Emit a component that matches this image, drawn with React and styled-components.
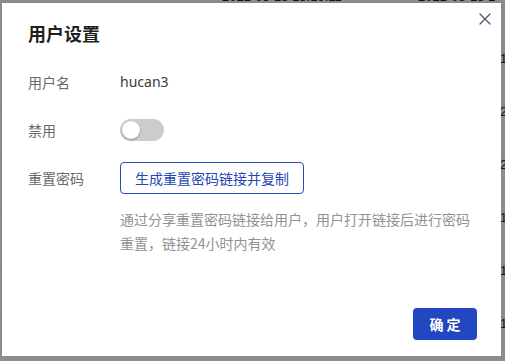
import React from "react";
import styled, { createGlobalStyle } from "styled-components";

const Global = createGlobalStyle`
  html, body { margin: 0; padding: 0; }
  body {
    width: 505px;
    height: 361px;
    overflow: hidden;
    background: #ffffff;
    font-family: "Noto Sans", "Noto Sans CJK SC", sans-serif;
  }
`;

const Page = styled.div`
  position: relative;
  width: 505px;
  height: 361px;
  overflow: hidden;
  background: #ffffff;
`;

const BackTable = styled.div`
  display: flex;
  flex-direction: column;
  margin-top: -9px;
`;

const BackRow = styled.div`
  display: flex;
  height: ${(p) => (p.$first ? 62 : 53)}px;
  align-items: flex-start;
  border-bottom: 1px solid #e8e8e8;
  box-sizing: border-box;
  font-size: 13px;
  line-height: 12px;
  color: #222;
  font-family: "Liberation Sans", sans-serif;
`;

const BackCell = styled.div`
  width: ${(p) => p.$w}px;
  flex: none;
  white-space: nowrap;
  overflow: hidden;
`;

const Overlay = styled.div`
  position: absolute;
  inset: 0;
  background: rgba(0, 0, 0, 0.45);
`;

const Modal = styled.div`
  position: absolute;
  left: 2px;
  top: 3px;
  width: 499px;
  height: 353px;
  background: #ffffff;
  box-sizing: border-box;
  display: flex;
  flex-direction: column;
`;

const Close = styled.button`
  position: absolute;
  top: 8px;
  right: 8px;
  width: 16px;
  height: 16px;
  padding: 0;
  border: 0;
  background: transparent;
  display: flex;
  align-items: center;
  justify-content: center;
  cursor: pointer;
`;

const Header = styled.div`
  padding: 17px 26px 0;
`;

const Title = styled.h2`
  margin: 0;
  font-size: 18px;
  line-height: 26px;
  font-weight: 700;
  color: #1f1f1f;
  font-family: "Noto Sans CJK SC", sans-serif;
`;

const Body = styled.div`
  padding: 20px 26px 0;
  display: grid;
  grid-template-columns: 92px 1fr;
  row-gap: 16px;
  align-items: center;
`;

const Label = styled.div`
  font-size: 14px;
  color: #666a70;
  height: 32px;
  line-height: 32px;
  font-family: "Noto Sans CJK SC", sans-serif;
`;

const Value = styled.div`
  font-size: 14px;
  color: #3a3a3a;
  height: 32px;
  line-height: 32px;
  display: flex;
  align-items: center;
`;

const Switch = styled.span`
  position: relative;
  display: inline-block;
  width: 44px;
  height: 22px;
  border-radius: 11px;
  background: #cccccc;
`;

const Knob = styled.span`
  position: absolute;
  left: 2px;
  top: 2px;
  width: 18px;
  height: 18px;
  border-radius: 50%;
  background: #ffffff;
  box-shadow: 0 1px 2px rgba(0, 0, 0, 0.3);
`;

const OutlineButton = styled.button`
  height: 32px;
  padding: 0 14px;
  border: 1px solid #2a4ab8;
  border-radius: 4px;
  background: #ffffff;
  color: #2446b3;
  font-size: 14px;
  font-family: "Noto Sans CJK SC", sans-serif;
  cursor: pointer;
`;

const Help = styled.p`
  grid-column: 2;
  margin: -3px 0 0;
  width: 356px;
  font-size: 14px;
  line-height: 24px;
  color: #8f9296;
  font-family: "Noto Sans CJK SC", sans-serif;
`;

const Footer = styled.div`
  margin-top: auto;
  padding: 0 24px 16px;
  display: flex;
  justify-content: flex-end;
`;

const PrimaryButton = styled.button`
  width: 64px;
  height: 32px;
  border: 0;
  border-radius: 4px;
  background: #2347c0;
  color: #ffffff;
  font-size: 14px;
  font-weight: 700;
  letter-spacing: 3px;
  text-indent: 3px;
  font-family: "Noto Sans CJK SC", sans-serif;
  cursor: pointer;
`;

const rows = [0, 1, 2, 3, 4, 5, 6];

export default function App() {
  return (
    <>
      <Global />
      <Page>
        <BackTable>
          {rows.map((r) => (
            <BackRow key={r} $first={r === 0}>
              <BackCell $w={222} />
              <BackCell $w={196}>{r === 0 ? "2022-08-18 18:19:11" : ""}</BackCell>
              <BackCell $w={82}>{r === 0 ? "2022-08-18 1" : ""}</BackCell>
              <BackCell $w={20}>{r === 0 ? "" : r === 2 || r === 3 ? "2" : "1"}</BackCell>
            </BackRow>
          ))}
        </BackTable>
        <Overlay />
        <Modal>
          <Close aria-label="close">
            <svg width="12" height="12" viewBox="0 0 12 12">
              <path
                d="M1 1 L11 11 M11 1 L1 11"
                stroke="#4e5668"
                strokeWidth="1.3"
                strokeLinecap="round"
              />
            </svg>
          </Close>
          <Header>
            <Title>用户设置</Title>
          </Header>
          <Body>
            <Label>用户名</Label>
            <Value>hucan3</Value>
            <Label>禁用</Label>
            <Value>
              <Switch>
                <Knob />
              </Switch>
            </Value>
            <Label>重置密码</Label>
            <Value>
              <OutlineButton>生成重置密码链接并复制</OutlineButton>
            </Value>
            <Help>通过分享重置密码链接给用户，用户打开链接后进行密码重置，链接24小时内有效</Help>
          </Body>
          <Footer>
            <PrimaryButton>确定</PrimaryButton>
          </Footer>
        </Modal>
      </Page>
    </>
  );
}
